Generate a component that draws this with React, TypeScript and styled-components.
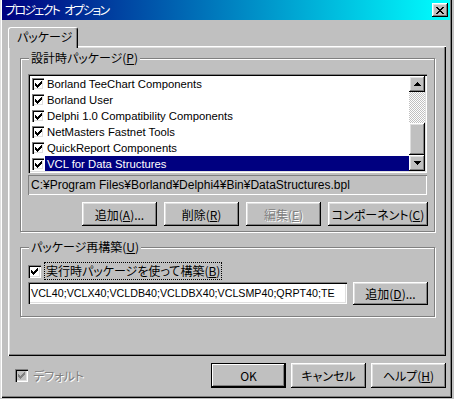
import React from "react";
import styled, { createGlobalStyle, css } from "styled-components";

const GlobalStyle = createGlobalStyle`
  html, body {
    margin: 0;
    padding: 0;
    background: #c0c0c0;
  }
  body {
    font-family: "Noto Sans CJK JP", "Liberation Sans", sans-serif;
    font-size: 12px;
    font-feature-settings: "palt";
    color: #000;
  }
  * {
    box-sizing: border-box;
  }
`;

const raised = css`
  box-shadow: inset -1px -1px #000, inset 1px 1px #fff, inset -2px -2px #808080,
    inset 2px 2px #dfdfdf;
`;

const sunken = css`
  box-shadow: inset 1px 1px #808080, inset 2px 2px #000, inset -1px -1px #fff,
    inset -2px -2px #dfdfdf;
`;

const latinText = (size: number) => css`
  font-family: "Liberation Sans", "Noto Sans CJK JP", sans-serif;
  font-size: ${size}px;
`;

const Window = styled.div`
  width: 452px;
  height: 398px;
  padding: 0 2px 2px 2px;
  background: #c0c0c0;
  box-shadow: inset 1px 0 #dfdfdf, inset 2px 0 #fff, inset -1px -1px #000,
    inset -2px -2px #808080;
  display: flex;
  flex-direction: column;
`;

const TitleBar = styled.div`
  height: 20px;
  padding: 0 2px 0 3px;
  display: flex;
  align-items: center;
  justify-content: space-between;
  background: linear-gradient(to right, #000080, #00ffff);
  color: #fff;
  line-height: 16px;
`;

const Title = styled.span`
  letter-spacing: -1.7px;
  word-spacing: 4px;
`;

const CloseButton = styled.div`
  width: 16px;
  height: 14px;
  background: #c0c0c0;
  display: flex;
  align-items: center;
  justify-content: center;
  ${raised};
`;

const TabArea = styled.div`
  margin: 7px 0 0 6px;
  display: flex;
  flex-direction: column;
`;

const TabStrip = styled.div`
  display: flex;
  height: 19px;
`;

const Tab = styled.div`
  width: 70px;
  height: 21px;
  margin-bottom: -2px;
  position: relative;
  z-index: 1;
  padding-left: 8px;
  line-height: 18px;
  background: #c0c0c0;
  border-top: 1px solid #fff;
  border-left: 1px solid #fff;
  border-right: 1px solid #000;
  border-radius: 3px 3px 0 0;
  box-shadow: inset -1px 0 #808080;
`;

const Panel = styled.div`
  width: 438px;
  height: 310px;
  padding: 0 11px 0 12px;
  display: flex;
  flex-direction: column;
  box-shadow: inset 1px 1px #fff, inset -1px -1px #000, inset -2px -2px #808080,
    inset 2px 2px #dfdfdf;
`;

const Group = styled.fieldset<{ $top: number; $padTop: number; $padBottom: number }>`
  margin: ${(p) => p.$top}px 0 0 0;
  padding: ${(p) => p.$padTop}px 7px ${(p) => p.$padBottom}px 7px;
  border: 1px solid #808080;
  box-shadow: inset 1px 1px #fff, 1px 1px #fff;
  min-width: 0;
`;

const Legend = styled.legend`
  padding: 0 2px;
  margin-left: 1px;
  line-height: 14px;
  background: #c0c0c0;
`;

const ListBox = styled.div`
  height: 99px;
  padding: 2px;
  background: #fff;
  display: flex;
  ${sunken};
`;

const ListItems = styled.div`
  flex: 1;
  display: flex;
  flex-direction: column;
  overflow: hidden;
`;

const ListRow = styled.div`
  height: 16px;
  padding-left: 2px;
  display: flex;
  align-items: center;
  white-space: nowrap;
`;

const ItemLabel = styled.div<{ $selected?: boolean }>`
  flex: 1;
  height: 16px;
  margin-left: 1px;
  padding-left: 2px;
  line-height: 16px;
  ${latinText(11.3)};
  background: ${(p) => (p.$selected ? "#000080" : "transparent")};
  color: ${(p) => (p.$selected ? "#fff" : "#000")};
`;

const ScrollBar = styled.div`
  width: 16px;
  display: flex;
  flex-direction: column;
`;

const ScrollButton = styled.div<{ $h: number }>`
  height: ${(p) => p.$h}px;
  background: #c0c0c0;
  display: flex;
  align-items: center;
  justify-content: center;
  ${raised};
`;

const ScrollTrack = styled.div`
  flex: 1;
  background: repeating-conic-gradient(#c0c0c0 0 25%, #fff 0 50%) 0 0 / 2px 2px;
`;

const PathField = styled.div`
  margin-top: 2px;
  height: 20px;
  padding-left: 3px;
  line-height: 20px;
  ${latinText(12)};
  white-space: nowrap;
  overflow: hidden;
  box-shadow: inset 1px 1px #808080, inset -1px -1px #fff;
`;

const ButtonRow = styled.div<{ $top: number }>`
  margin-top: ${(p) => p.$top}px;
  display: flex;
  justify-content: flex-end;
  gap: 7px;
  margin-right: -1px;
`;

const Button = styled.button<{ $w?: number; $h?: number; $default?: boolean }>`
  width: ${(p) => p.$w ?? 75}px;
  height: ${(p) => p.$h ?? 24}px;
  padding: 0;
  font: inherit;
  font-feature-settings: "palt";
  color: #000;
  background: #c0c0c0;
  border: none;
  white-space: nowrap;
  ${raised};
  ${(p) =>
    p.$default &&
    css`
      border: 1px solid #000;
      box-shadow: inset -1px -1px #000, inset 1px 1px #fff, inset -2px -2px #808080;
    `}
  &:disabled {
    color: #808080;
    text-shadow: 1px 1px #fff;
  }
`;

const CheckRow = styled.div`
  height: 18px;
  display: flex;
  align-items: center;
`;

const CheckBox = styled.div<{ $size?: number; $disabled?: boolean }>`
  width: ${(p) => p.$size ?? 13}px;
  height: ${(p) => p.$size ?? 13}px;
  flex: none;
  background: ${(p) => (p.$disabled ? "#c0c0c0" : "#fff")};
  display: flex;
  align-items: center;
  justify-content: center;
  ${sunken};
`;

const FocusLabel = styled.span`
  margin-left: 3px;
  padding: 0 1px;
  line-height: 16px;
  border: 1px dotted #000;
`;

const EditRow = styled.div`
  margin-top: 1px;
  height: 24px;
  display: flex;
  align-items: center;
  justify-content: space-between;
  margin-right: -1px;
`;

const EditBox = styled.div`
  width: 319px;
  height: 22px;
  padding-left: 3px;
  line-height: 22px;
  ${latinText(10.7)};
  background: #fff;
  white-space: nowrap;
  overflow: hidden;
  ${sunken};
`;

const Footer = styled.div`
  margin-top: 7px;
  padding: 0 4px 0 13px;
  display: flex;
  align-items: center;
`;

const DisabledText = styled.span`
  margin-left: 5px;
  color: #808080;
  text-shadow: 1px 1px #fff;
`;

const FooterButtons = styled.div`
  margin-left: auto;
  display: flex;
  gap: 5px;
`;

const Check = ({ color = "#000" }: { color?: string }) => (
  <svg width="7" height="7" viewBox="0 0 7 7" shapeRendering="crispEdges">
    <path
      d="M6 0h1v3h-1v1h-1v1h-1v1h-1v1h-1v-1h-1v-1h-1v-3h1v1h1v1h1v-1h1v-1h1z"
      fill={color}
    />
  </svg>
);

const Arrow = ({ up }: { up?: boolean }) => (
  <svg width="7" height="4" viewBox="0 0 7 4" shapeRendering="crispEdges">
    <path
      d={
        up
          ? "M3 0h1v1h1v1h1v1h1v1h-7v-1h1v-1h1v-1h1z"
          : "M0 0h7v1h-1v1h-1v1h-1v1h-1v-1h-1v-1h-1v-1h-1z"
      }
      fill="#000"
    />
  </svg>
);

const CloseX = () => (
  <svg width="8" height="7" viewBox="0 0 8 7" shapeRendering="crispEdges">
    <path
      d="M0 0h2v1h1v1h2v-1h1v-1h2v1h-1v1h-1v1h-1v1h1v1h1v1h1v1h-2v-1h-1v-1h-2v1h-1v1h-2v-1h1v-1h1v-1h1v-1h-1v-1h-1v-1h-1z"
      fill="#000"
    />
  </svg>
);

const packages = [
  "Borland TeeChart Components",
  "Borland User",
  "Delphi 1.0 Compatibility Components",
  "NetMasters Fastnet Tools",
  "QuickReport Components",
  "VCL for Data Structures",
];

const App = () => {
  return (
    <>
      <GlobalStyle />
      <Window>
        <TitleBar>
          <Title>プロジェクト オプション</Title>
          <CloseButton>
            <CloseX />
          </CloseButton>
        </TitleBar>
        <TabArea>
          <TabStrip>
            <Tab>パッケージ</Tab>
          </TabStrip>
          <Panel>
            <Group $top={5} $padTop={9} $padBottom={5}>
              <Legend>
                設計時パッケージ(<u>P</u>)
              </Legend>
              <ListBox>
                <ListItems>
                  {packages.map((name, i) => (
                    <ListRow key={name}>
                      <CheckBox $size={12}>
                        <Check />
                      </CheckBox>
                      <ItemLabel $selected={i === packages.length - 1}>{name}</ItemLabel>
                    </ListRow>
                  ))}
                </ListItems>
                <ScrollBar>
                  <ScrollButton $h={16}>
                    <Arrow up />
                  </ScrollButton>
                  <ScrollTrack />
                  <ScrollButton $h={32} />
                  <ScrollButton $h={16}>
                    <Arrow />
                  </ScrollButton>
                </ScrollBar>
              </ListBox>
              <PathField>C:¥Program Files¥Borland¥Delphi4¥Bin¥DataStructures.bpl</PathField>
              <ButtonRow $top={7}>
                <Button>
                  追加(<u>A</u>)...
                </Button>
                <Button>
                  削除(<u>R</u>)
                </Button>
                <Button disabled>
                  編集(<u>E</u>)
                </Button>
                <Button $w={100}>
                  コンポーネント(<u>C</u>)
                </Button>
              </ButtonRow>
            </Group>
            <Group $top={8} $padTop={8} $padBottom={11}>
              <Legend>
                パッケージ再構築(<u>U</u>)
              </Legend>
              <CheckRow>
                <CheckBox>
                  <Check />
                </CheckBox>
                <FocusLabel>
                  実行時パッケージを使って構築(<u>B</u>)
                </FocusLabel>
              </CheckRow>
              <EditRow>
                <EditBox>VCL40;VCLX40;VCLDB40;VCLDBX40;VCLSMP40;QRPT40;TE</EditBox>
                <Button $h={23}>
                  追加(<u>D</u>)...
                </Button>
              </EditRow>
            </Group>
          </Panel>
        </TabArea>
        <Footer>
          <CheckBox $disabled>
            <Check color="#808080" />
          </CheckBox>
          <DisabledText>デフォルト</DisabledText>
          <FooterButtons>
            <Button $h={25} $default>
              OK
            </Button>
            <Button $h={25}>キャンセル</Button>
            <Button $h={25}>
              ヘルプ(<u>H</u>)
            </Button>
          </FooterButtons>
        </Footer>
      </Window>
    </>
  );
};

export default App;
